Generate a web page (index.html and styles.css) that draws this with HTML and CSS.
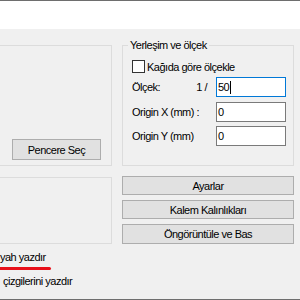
FILE: index.html
```html
<!DOCTYPE html>
<html lang="tr">
  <head>
    <meta charset="UTF-8" />
    <title>Yazdır</title>
    <link rel="stylesheet" href="styles.css">
  </head>
  <body>
    <div class="window">
      <div class="topbar"></div>

      <div class="panel">
        <!-- pencere seçimi -->
        <div class="group group-left">
          <button class="btn btn-window">Pencere Seç</button>
        </div>

        <!-- yerleşim ve ölçek -->
        <div class="group group-scale">
          <span class="legend">Yerleşim ve ölçek</span>
          <label class="check-row"><span class="checkbox"></span>Kağıda göre ölçekle</label>
          <div class="field-row">
            <span class="field-label">Ölçek:</span>
            <span class="ratio">1 /</span>
            <span class="textbox focused">50<span class="caret"></span></span>
          </div>
          <div class="field-row field-gap">
            <span class="field-label">Origin X (mm) :</span>
            <span class="textbox">0</span>
          </div>
          <div class="field-row">
            <span class="field-label">Origin Y (mm)</span>
            <span class="textbox">0</span>
          </div>
        </div>

        <div class="group group-lower"></div>

        <div class="actions">
          <button class="btn btn-action">Ayarlar</button>
          <button class="btn btn-action">Kalem Kalınlıkları</button>
          <button class="btn btn-action btn-last">Öngörüntüle ve Bas</button>
        </div>
      </div>

      <!-- yazdırma seçenekleri -->
      <div class="options">
        <div class="option-line">yah yazdır</div>
        <div class="mark"></div>
        <div class="option-line option-indent">çizgilerini yazdır</div>
      </div>
    </div>
  </body>
</html>
```

FILE: styles.css
```css
* {
  box-sizing: border-box;
}

body {
  margin: 0;
  font-family: "Liberation Sans", Arial, sans-serif;
  font-size: 11px;
  letter-spacing: -0.5px;
  color: #000;
  background-color: #f0f0f0;
  overflow: hidden;
}

.window {
  height: 300px;
  border-top: 1px solid #6e6e6e;
  border-bottom: 1px solid #6e6e6e;
  display: flex;
  flex-direction: column;
  overflow: hidden;
}

.topbar {
  flex: none;
  height: 28px;
  background-color: #fff;
}

.panel {
  display: grid;
  grid-template-columns: 122px 172px;
  grid-template-rows: 121px 68px;
  column-gap: 10px;
  row-gap: 10px;
  margin: 16px 0 0 -10px;
}

.group {
  border: 1px solid #dcdcdc;
}

.group-left {
  display: flex;
  justify-content: flex-end;
  align-items: flex-end;
  padding: 0 10px 5px 0;
}

.btn {
  font: inherit;
  letter-spacing: inherit;
  color: #000;
  background-color: #e1e1e1;
  border: 1px solid #adadad;
  padding: 0;
  margin: 0;
}

.btn-window {
  width: 89px;
  height: 21px;
}

.group-scale {
  padding: 0 0 0 9px;
}

.legend {
  display: block;
  width: max-content;
  height: 13px;
  line-height: 13px;
  margin: -7px 0 0 -4px;
  padding: 0 2px;
  background-color: #f0f0f0;
}

.check-row {
  display: flex;
  align-items: center;
  height: 13px;
  margin-top: 8px;
}

.checkbox {
  width: 13px;
  height: 13px;
  border: 1px solid #333;
  background-color: #fff;
  margin-right: 2px;
}

.field-row {
  display: flex;
  align-items: center;
  height: 20px;
  margin-top: 4px;
}

.field-gap {
  margin-top: 5px;
}

.field-label {
  flex: 1;
  white-space: nowrap;
}

.ratio {
  margin-right: 9px;
}

.textbox {
  display: flex;
  align-items: center;
  width: 70px;
  height: 20px;
  margin-right: 7px;
  padding-left: 1px;
  background-color: #fff;
  border: 1px solid #7a7a7a;
}

.textbox.focused {
  border-color: #0078d7;
}

.caret {
  width: 1px;
  height: 13px;
  margin-left: 1px;
  background-color: #000;
}

.group-lower {
  align-self: end;
  height: 67px;
}

.actions {
  display: flex;
  flex-direction: column;
  gap: 5px;
}

.btn-action {
  height: 19px;
}

.btn-last {
  height: 20px;
}

.options {
  padding-top: 6px;
}

.option-line {
  height: 14px;
  line-height: 14px;
  white-space: nowrap;
}

.mark {
  width: 51px;
  height: 3px;
  margin-top: 3px;
  background-color: #e8101a;
  border-radius: 0 2px 2px 0;
}

.option-indent {
  margin: 4px 0 0 3px;
}
```
